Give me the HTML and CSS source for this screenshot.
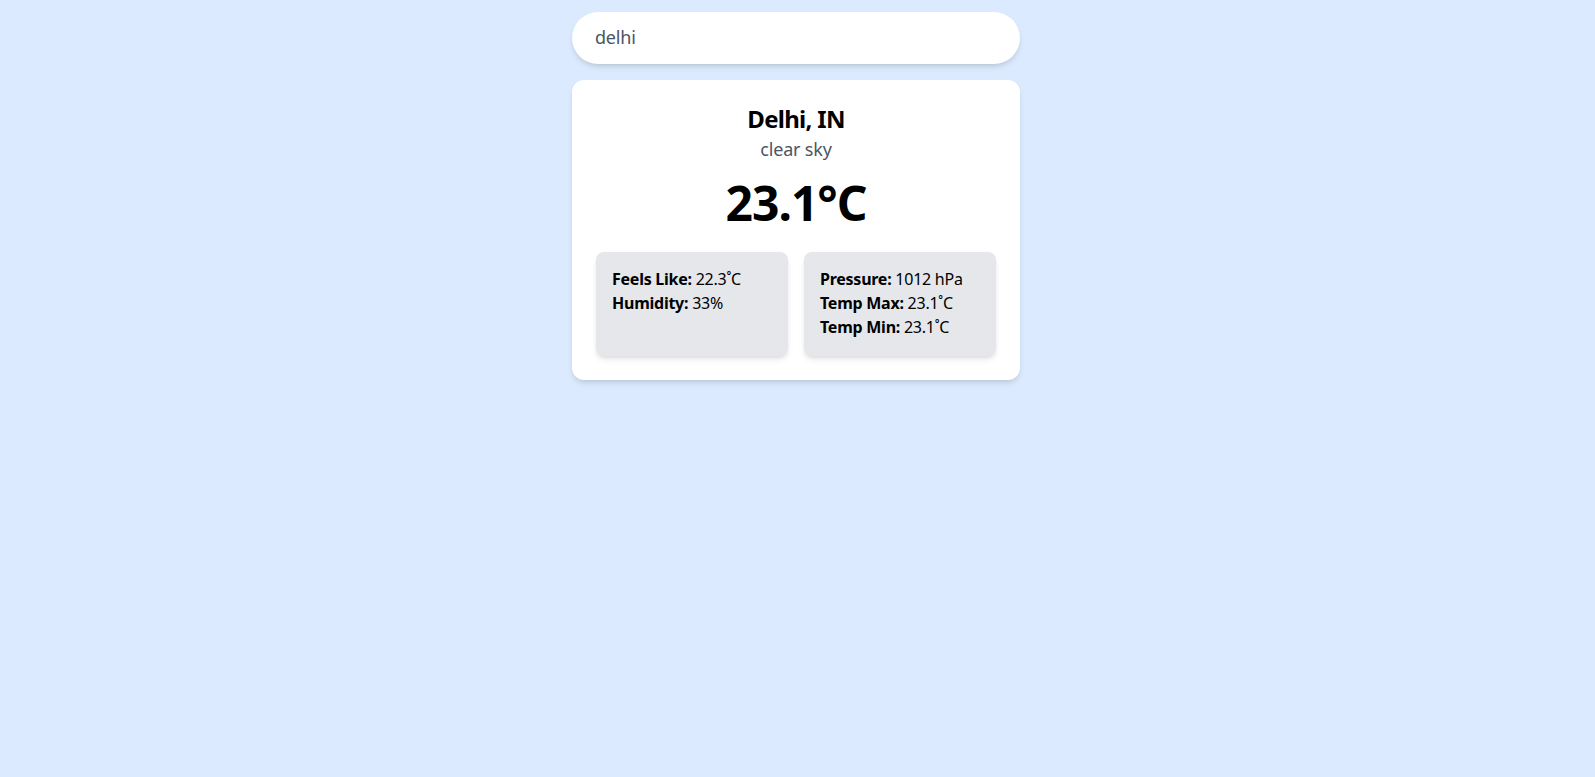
FILE: index.html
```html
<!DOCTYPE html>
<html lang="en">
<head>
<meta charset="utf-8">
<title>Weather</title>
<link rel="stylesheet" href="styles.css">
</head>
<body>
<div class="page">
<main class="app">
  <input class="search" type="text" value="delhi" autofocus>
  <section class="card">
    <h1 class="city">Delhi, IN</h1>
    <p class="desc">clear sky</p>
    <p class="temp">23.1°C</p>
    <div class="details">
      <div class="box">
        <p><b>Feels Like:</b> 22.3˚C</p>
        <p><b>Humidity:</b> 33%</p>
      </div>
      <div class="box">
        <p><b>Pressure:</b> 1012 hPa</p>
        <p><b>Temp Max:</b> 23.1˚C</p>
        <p><b>Temp Min:</b> 23.1˚C</p>
      </div>
    </div>
  </section>
</main>
</div>
</body>
</html>
```
FILE: styles.css
```css
* { box-sizing: border-box; }
html, body { margin: 0; }
body {
  background: #dbeafe;
  font-family: "Noto Sans", "Open Sans", sans-serif;
  color: #000;
  min-height: 100vh;
}
.page {
  padding: 12px 3px 0 0;
}
.app {
  width: 448px;
  margin: 0 auto;
  display: flex;
  flex-direction: column;
  gap: 16px;
}
.search {
  width: 100%;
  height: 52px;
  border: none;
  border-radius: 9999px;
  background: #fff;
  padding: 0 24px 2px 23px;
  font-family: inherit;
  font-size: 18px;
  letter-spacing: -0.2px;
  color: #4b5563;
  caret-color: #111;
  box-shadow: 0 4px 6px -1px rgba(0,0,0,0.1), 0 2px 4px -2px rgba(0,0,0,0.1);
  outline: none;
}
.card {
  background: #fff;
  border-radius: 12px;
  padding: 23px 24px 24px;
  box-shadow: 0 4px 6px -1px rgba(0,0,0,0.1), 0 2px 4px -2px rgba(0,0,0,0.1);
  text-align: center;
}
.city {
  margin: 0;
  font-size: 24px;
  line-height: 32px;
  font-weight: 700;
  letter-spacing: -0.7px;
}
.desc {
  margin: 0;
  font-size: 18px;
  line-height: 28px;
  color: #4b5563;
  letter-spacing: -0.2px;
}
.temp {
  margin: 16px 0 0;
  font-size: 48px;
  line-height: 48px;
  font-weight: 700;
  letter-spacing: -1px;
}
.details {
  margin-top: 25px;
  display: grid;
  grid-template-columns: 1fr 1fr;
  gap: 16px;
  text-align: left;
}
.box {
  background: #e5e7eb;
  border-radius: 8px;
  padding: 15px 16px 17px;
  box-shadow: 0 4px 6px -1px rgba(0,0,0,0.1), 0 2px 4px -2px rgba(0,0,0,0.1);
}
.box p {
  margin: 0;
  font-size: 16px;
  line-height: 24px;
  letter-spacing: -0.25px;
}
.box b { font-weight: 700; }
```
